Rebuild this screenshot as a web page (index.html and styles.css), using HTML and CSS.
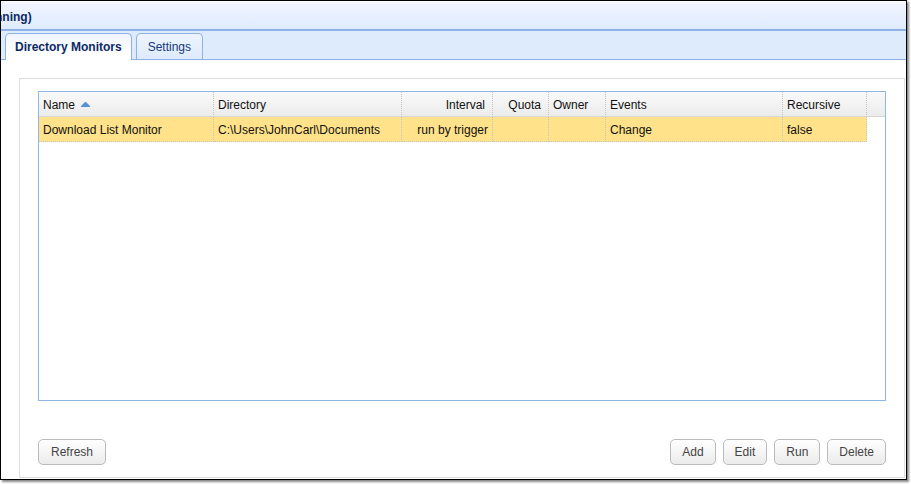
FILE: index.html
```html
<!DOCTYPE html>
<html lang="en">
<head>
<meta charset="utf-8">
<title>Directory Monitors</title>
<link rel="stylesheet" href="styles.css">
</head>
<body>
<div class="window">
  <header class="title-bar"><h1 class="title">nning)</h1></header>
  <nav class="tabs" role="tablist">
    <button class="tab tab-active" type="button" role="tab" aria-selected="true">Directory Monitors</button>
    <button class="tab" type="button" role="tab" aria-selected="false">Settings</button>
  </nav>
  <main class="content">
    <section class="panel">
      <div class="grid">
        <table class="monitors">
          <colgroup>
            <col class="col-name"><col class="col-directory"><col class="col-interval"><col class="col-quota"><col class="col-owner"><col class="col-events"><col class="col-recursive"><col>
          </colgroup>
          <thead>
            <tr>
              <th scope="col" aria-sort="ascending">Name<svg class="sort" viewBox="0 0 9 5" aria-hidden="true"><path d="M0 5V4L4 0H5L9 4V5Z"/></svg></th>
              <th scope="col">Directory</th>
              <th scope="col" class="number">Interval</th>
              <th scope="col" class="number">Quota</th>
              <th scope="col">Owner</th>
              <th scope="col">Events</th>
              <th scope="col">Recursive</th>
              <td class="filler"></td>
            </tr>
          </thead>
          <tbody>
            <tr class="selected">
              <td>Download List Monitor</td>
              <td>C:\Users\JohnCarl\Documents</td>
              <td class="number">run by trigger</td>
              <td></td>
              <td></td>
              <td>Change</td>
              <td>false</td>
              <td class="filler"></td>
            </tr>
          </tbody>
        </table>
      </div>
      <div class="actions">
        <button class="button button-wide" type="button">Refresh</button>
        <span class="spacer"></span>
        <button class="button" type="button">Add</button>
        <button class="button" type="button">Edit</button>
        <button class="button" type="button">Run</button>
        <button class="button" type="button">Delete</button>
      </div>
    </section>
  </main>
</div>
</body>
</html>
```
FILE: styles.css
```css
* {
  box-sizing: border-box;
}

body {
  margin: 0;
  height: 100vh;
  padding: 0 4px 4px 0;
  background: #fff;
  color: #111;
  font: 12px/16px "Liberation Sans", Arial, sans-serif;
}

.window {
  display: flex;
  flex-direction: column;
  height: 100%;
  overflow: hidden;
  border: 1px solid #000;
  background: #fff;
  box-shadow: 2px 2px 2px #888;
}

.title-bar {
  height: 30px;
  flex: none;
  padding-top: 8px;
  overflow: hidden;
  border-bottom: 2px solid #8db2e3;
  background: linear-gradient(#fff 0, #f1f4ff 3px, #deebfd);
}

.title {
  margin: 0 0 0 -6px;
  color: #0c2a63;
  font-size: 12px;
  line-height: 16px;
}

.tabs {
  display: flex;
  flex: none;
  gap: 4px;
  height: 29px;
  padding: 2px 4px 0;
  border-bottom: 1px solid #8db2e3;
  background: #deebfd;
}

.tab {
  height: 26px;
  padding: 0 11px;
  border: 1px solid #8db2e3;
  border-bottom: 0;
  border-radius: 5px 5px 0 0;
  background: linear-gradient(#edf4fe, #deebfd);
  color: #15387a;
  font: inherit;
}

.tab-active {
  height: 27px;
  padding: 0 9px;
  background: linear-gradient(#f0f4ff, #fff 80%);
  color: #0c2a63;
  font-weight: bold;
}

.content {
  display: flex;
  flex: 1;
  min-height: 0;
  padding: 18px 1px 1px 18px;
}

.panel {
  display: flex;
  flex: 1;
  flex-direction: column;
  min-width: 0;
  padding: 12px 18px;
  border: 1px solid #ddd;
}

.grid {
  flex: 1;
  border: 1px solid #8db6e4;
}

.monitors {
  width: 100%;
  table-layout: fixed;
  border-collapse: separate;
  border-spacing: 0;
}

.col-name { width: 175px; }
.col-directory { width: 188px; }
.col-interval { width: 91px; }
.col-quota { width: 56px; }
.col-owner { width: 57px; }
.col-events { width: 177px; }
.col-recursive { width: 84px; }

.monitors th,
.monitors td {
  height: 25px;
  padding: 2px 4px 0;
  border-right: 1px dotted #c5c5c5;
  border-bottom: 1px dotted #c5c5c5;
  font-weight: normal;
  text-align: left;
  white-space: nowrap;
}

.monitors thead th,
.monitors thead td {
  border-bottom: 1px solid #d6d6d6;
  background: linear-gradient(#f9f9f9, #ececec);
}

.monitors .number {
  text-align: right;
}

.monitors th.number {
  padding-right: 7px;
}

.selected td {
  background: #ffe28a;
}

.monitors .filler {
  padding: 0;
  border-right: 0;
}

.monitors .selected .filler {
  border-bottom: 0;
  background: none;
}

.sort {
  width: 9px;
  height: 5px;
  margin-left: 6px;
  vertical-align: 2px;
  fill: #5b92d4;
}

.actions {
  display: flex;
  gap: 7px;
  padding-top: 38px;
}

.spacer {
  flex: 1;
  margin-right: -7px;
}

.button {
  height: 26px;
  padding: 0 11px;
  border: 1px solid #bbb;
  border-radius: 5px;
  background: linear-gradient(#fff, #ebebeb);
  color: #444;
  font: 12px/16px "Liberation Sans", Arial, sans-serif;
}

.button-wide {
  min-width: 68px;
}
```
